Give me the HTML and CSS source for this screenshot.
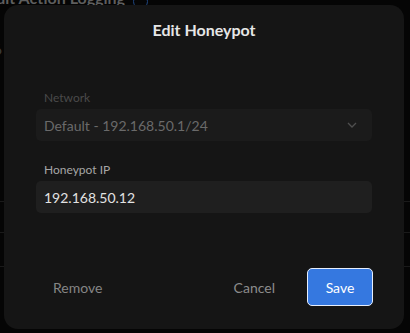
FILE: index.html
```html
<!DOCTYPE html>
<html lang="en">
<head>
    <meta charset="UTF-8">
    <meta name="viewport" content="width=device-width, initial-scale=1.0">
    <title>Edit Honeypot</title>
    <link rel="stylesheet" href="styles.css">
</head>
<body>

    <!-- Settings page behind the dialog -->
    <div class="page">
        <div class="page-title">
            <span>Default Action Logging</span>
            <span class="info-icon"></span>
        </div>
        <div class="page-rows">
            <div class="row row-a"><span>Ports 6</span></div>
            <div class="row row-b"><span>Server</span></div>
            <div class="row row-c"><span>Detail</span></div>
            <div class="row row-d"><span>Conf</span></div>
            <div class="row row-e"></div>
        </div>
    </div>

    <!-- Dialog -->
    <div class="overlay">
        <div class="modal">
            <h2 class="modal-title">Edit Honeypot</h2>

            <div class="modal-body">
                <div class="field">
                    <label class="field-label disabled">Network</label>
                    <div class="select disabled">
                        <span>Default - 192.168.50.1/24</span>
                        <svg class="chevron" width="12" height="12" viewBox="0 0 12 12">
                            <polyline points="2,4 6,8 10,4" fill="none" stroke="currentColor" stroke-width="1.3"/>
                        </svg>
                    </div>
                </div>
                <div class="field">
                    <label class="field-label" for="ip">Honeypot IP</label>
                    <input class="text-input" id="ip" type="text" value="192.168.50.12">
                </div>
            </div>

            <div class="modal-footer">
                <button class="btn btn-text btn-remove">Remove</button>
                <div class="footer-right">
                    <button class="btn btn-text">Cancel</button>
                    <button class="btn btn-primary">Save</button>
                </div>
            </div>
        </div>
    </div>

</body>
</html>
```

FILE: styles.css
```css
body {
    margin: 0;
    padding: 0;
    background: #050505;
    font-family: 'Lato', 'Liberation Sans', sans-serif;
    overflow: hidden;
    height: 333px;
}
.page-title {
    display: flex;
    align-items: flex-end;
    gap: 8px;
    margin: -12px 0 0 -38px;
    height: 20px;
    font-size: 16px;
    font-weight: 700;
    line-height: 20px;
    color: #5e5e5e;
}
.info-icon {
    width: 13px;
    height: 13px;
    margin-bottom: -1px;
    border: 1.5px solid #1f4680;
    border-radius: 50%;
}
.page-rows {
    margin-top: 22px;
}
.row {
    box-sizing: border-box;
    border-bottom: 1px solid #1a1a1a;
    font-size: 16px;
    color: #3c3c3c;
    display: flex;
    align-items: center;
}
.row span {
    margin-left: -48px;
}
.row-a {
    height: 36px;
    border-bottom: none;
}
.row-b {
    height: 56px;
    border-bottom: none;
}
.row-c {
    height: 80px;
    align-items: flex-end;
    padding-bottom: 13px;
}
.row-d { height: 31px; }
.row-e { height: 34px; }

.overlay {
    position: absolute;
    inset: 0;
}
.modal {
    position: absolute;
    left: 4px;
    top: 5px;
    width: 400px;
    height: 324px;
    box-sizing: border-box;
    padding: 15px 32px 23px;
    background: #151515;
    border-radius: 14px;
    display: flex;
    flex-direction: column;
}
.modal-title {
    margin: 0;
    font-size: 16px;
    line-height: 20px;
    font-weight: 700;
    text-align: center;
    color: #e6e6e6;
}
.modal-body {
    margin-top: 50px;
    display: flex;
    flex-direction: column;
    gap: 21px;
}
.field {
    display: flex;
    flex-direction: column;
}
.field-label {
    font-size: 12px;
    line-height: 16px;
    color: #a6a6a6;
    margin: 0 0 3px 8px;
}
.field-label.disabled {
    color: #4a4a4a;
}
.select,
.text-input {
    height: 32px;
    box-sizing: border-box;
    border-radius: 5px;
    padding: 0 8px;
    font-family: inherit;
    font-size: 14px;
}
.select {
    display: flex;
    align-items: center;
    justify-content: space-between;
    background: #1b1b1b;
    color: #6a6a6a;
}
.chevron {
    color: #4f4f4f;
    margin-right: 6px;
}
.text-input {
    width: 100%;
    border: none;
    outline: none;
    background: #1f1f1f;
    color: #e2e2e2;
}
.modal-footer {
    margin-top: auto;
    display: flex;
    align-items: center;
    justify-content: space-between;
}
.footer-right {
    display: flex;
    gap: 16px;
}
.btn {
    height: 38px;
    padding: 0 16px;
    border-radius: 5px;
    font-family: inherit;
    font-size: 14px;
    cursor: pointer;
}
.btn-text {
    background: none;
    border: none;
    color: #8c8c8c;
}
.btn-remove {
    margin-left: 1px;
    color: #858585;
}
.btn-primary {
    width: 66px;
    margin-right: -1px;
    background: #3578e0;
    border: 1px solid #e6eefc;
    color: #ffffff;
}
```
